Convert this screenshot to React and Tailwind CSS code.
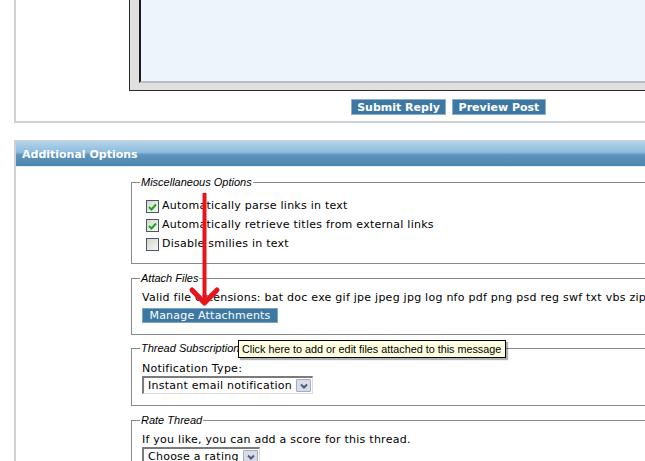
export default function App() {
  return (
    <div className="relative w-[645px] h-[461px] overflow-hidden bg-white font-['DejaVu_Sans',sans-serif] text-[11px] tracking-[0.25px] text-black">
      <ReplyPanel />
      <div className="h-[17px]" />
      <OptionsPanel />
      <Tooltip />
      <RedArrow />
    </div>
  )
}

function ReplyPanel() {
  return (
    <div className="ml-[14px] w-[760px] border-l-2 border-b-2 border-[#cdd0d4] pb-[6px]">
      <div className="ml-[113px] h-[91px] flex bg-[#e0e0e0] border-l border-b border-[#2b2b2b] pl-[9px] pb-[7px]">
        <div className="flex-1 bg-[#eef4fb] border-l-2 border-b-2 border-l-[#1a1a1a] border-b-[#b9bdc2]" />
      </div>
      <div className="mt-[8px] ml-[335px] flex gap-[6px]">
        <BlueButton label="Submit Reply" width="w-[95px]" />
        <BlueButton label="Preview Post" width="w-[94px]" />
      </div>
    </div>
  )
}

function BlueButton({ label, width }) {
  return (
    <div className={`${width} h-[16px] flex items-center justify-center bg-[#3d78a5] border border-[#8fb0cb] text-white font-bold text-[11px] tracking-normal leading-none`}>
      {label}
    </div>
  )
}

function OptionsPanel() {
  return (
    <div className="ml-[14px] w-[760px] border-l-2 border-t border-[#cdd0d4]">
      <div className="h-[26px] bg-[linear-gradient(to_bottom,#b3d4eb_0%,#8fbcdd_45%,#5e95bf_55%,#4b85ae_100%)] border-b border-[#e2ecf4] pl-[6px] text-white font-bold tracking-normal leading-[27px]">
        Additional Options
      </div>
      <div className="ml-[115px] pt-[9px] flex flex-col w-[600px]">
        <Fieldset title="Miscellaneous Options">
          <div className="pt-[9px] pb-[9px] pl-[14px]">
            <CheckRow checked label="Automatically parse links in text" />
            <CheckRow checked label="Automatically retrieve titles from external links" />
            <CheckRow label="Disable smilies in text" />
          </div>
        </Fieldset>
        <Fieldset title="Attach Files" className="mt-[8px]">
          <div className="pt-[6px] pb-[11px] pl-[10px]">
            <p className="leading-[16px] whitespace-nowrap">
              Valid file extensions: bat doc exe gif jpe jpeg jpg log nfo pdf png psd reg swf txt vbs zip
            </p>
            <div className="mt-[2px] w-[136px] h-[15px] flex items-center justify-center bg-[#3d78a5] border border-[#7fa3c0] text-white tracking-[0.2px] leading-none">
              Manage Attachments
            </div>
          </div>
        </Fieldset>
        <Fieldset title="Thread Subscription" className="mt-[7px]">
          <div className="pt-[8px] pb-[11px] pl-[10px]">
            <p className="leading-[14px]">Notification Type:</p>
            <Select label="Instant email notification" width="w-[171px]" />
          </div>
        </Fieldset>
        <Fieldset title="Rate Thread" className="mt-[8px]">
          <div className="pt-[7px] pb-[12px] pl-[10px]">
            <p className="leading-[14px]">If you like, you can add a score for this thread.</p>
            <Select label="Choose a rating" width="w-[118px]" />
          </div>
        </Fieldset>
      </div>
    </div>
  )
}

function Fieldset({ title, className = '', children }) {
  return (
    <fieldset className={`border border-[#8a8a8a] ${className}`}>
      <legend className="ml-[8px] px-[1px] font-['Liberation_Sans',sans-serif] italic text-[11px] tracking-normal leading-[12px]">
        {title}
      </legend>
      {children}
    </fieldset>
  )
}

function CheckRow({ checked, label }) {
  return (
    <div className="h-[19px] flex items-center gap-[3px]">
      <span className="w-[13px] h-[13px] flex items-center justify-center border border-[#4a5866] bg-[linear-gradient(135deg,#d6d6d0_0%,#f7f7f4_100%)]">
        {checked && (
          <svg width="9" height="8" viewBox="0 0 9 8">
            <path d="M1 4 L3.5 6.5 L8 1.5" fill="none" stroke="#21a121" strokeWidth="2" />
          </svg>
        )}
      </span>
      <span className="whitespace-nowrap">{label}</span>
    </div>
  )
}

function Select({ label, width }) {
  return (
    <div className={`${width} h-[18px] flex items-center bg-white border-t-2 border-l-2 border-r border-b border-t-[#7b7b7b] border-l-[#7b7b7b] border-r-[#dcdcdc] border-b-[#dcdcdc]`}>
      <span className="flex-1 pl-[4px] whitespace-nowrap leading-none">{label}</span>
      <span className="w-[15px] h-[13px] mr-[1px] flex items-center justify-center bg-[#d9dce6] border border-[#a6adbf] rounded-[1px]">
        <svg width="8" height="6" viewBox="0 0 8 6">
          <path d="M1 1.5 L4 4.5 L7 1.5" fill="none" stroke="#4d5b7c" strokeWidth="2" />
        </svg>
      </span>
    </div>
  )
}

function Tooltip() {
  return (
    <div className="absolute left-[238px] top-[340px] w-[268px] h-[18px] px-[3px] bg-[#ffffe1] border border-black font-['Liberation_Sans',sans-serif] text-[10.8px] tracking-normal leading-[16px] whitespace-nowrap shadow-[2px_2px_1px_rgba(0,0,0,0.3)]">
      Click here to add or edit files attached to this message
    </div>
  )
}

function RedArrow() {
  return (
    <svg className="absolute left-[188px] top-[190px]" width="34" height="120" viewBox="0 0 34 120">
      <rect x="14.5" y="3" width="4" height="108" fill="#e8141b" />
      <polyline points="4,100 16.5,113 29,100" fill="none" stroke="#e8141b" strokeWidth="5" strokeLinecap="round" strokeLinejoin="round" />
    </svg>
  )
}
